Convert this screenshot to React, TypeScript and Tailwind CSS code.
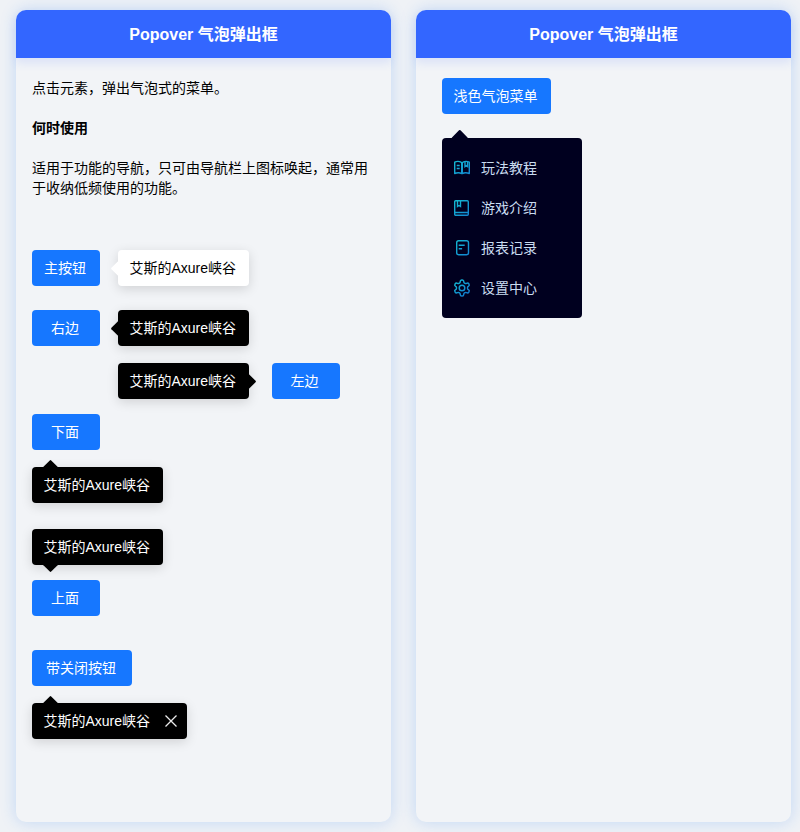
import React from "react";

function Btn({ children, className = "" }: { children: React.ReactNode; className?: string }) {
  return (
    <div className={"h-9 shrink-0 rounded-[4px] bg-[#1677ff] pr-[2px] flex items-center justify-center text-white text-[14px] " + className}>
      {children}
    </div>
  );
}

function Pop({ children, className = "", arrow }: { children?: React.ReactNode; className?: string; arrow: string }) {
  return (
    <div className={"relative h-9 shrink-0 rounded-[4px] pl-[11.5px] flex items-center text-[14px] shadow-[0_3px_12px_rgba(0,0,0,0.14)] " + className}>
      <span className={"absolute w-[11px] h-[11px] rotate-45 rounded-[1px] " + arrow} />
      <span className="relative whitespace-nowrap pr-[12.5px]">艾斯的Axure峡谷</span>
      {children}
    </div>
  );
}

function Header() {
  return (
    <div className="relative h-12 shrink-0 rounded-t-[10px] bg-[#3366ff] pt-[2px] flex items-center justify-center text-white text-[16px] font-bold shadow-[0_5px_10px_rgba(51,102,255,0.12)]">
      Popover 气泡弹出框
    </div>
  );
}

const dark = "bg-black text-white";
const card = "w-[375px] h-[812px] rounded-[10px] bg-[#f2f4f7] shadow-[0_0_16px_rgba(30,120,240,0.22)] flex flex-col";

const items: [string, React.ReactNode][] = [
  [
    "玩法教程",
    <>
      <path d="M2.700 4.200c2-1 4.500-1 6.300 0 .4.200.7.600.7 1.100v10.200c-2-1-4.700-1-7 0z" strokeLinejoin="round" />
      <path d="M17.300 4.200c-2-1-4.500-1-6.300 0-.4.200-.7.600-.7 1.100v10.200c2-1 4.700-1 7 0z" strokeLinejoin="round" />
      <path d="M4.700 7.500h3M4.700 10.500h3M13 3.600v5l1.300-1 1.300 1V3.600" />
    </>,
  ],
  [
    "游戏介绍",
    <>
      <rect x="2.700" y="2.700" width="13.600" height="14.600" rx="1" />
      <path d="M2.700 14.500h13.600M5.500 2.700v5.800l1.500-1 1.500 1V2.700" />
    </>,
  ],
  [
    "报表记录",
    <>
      <rect x="4.700" y="2.700" width="11.800" height="14" rx="2" />
      <path d="M6.700 7.300h6M6.700 10.700h3.400" strokeWidth="1.600" />
    </>,
  ],
  [
    "设置中心",
    <g transform="translate(0.400 0.400) scale(0.8)" strokeWidth="1.800">
      <path d="M12.220 2h-.44a2 2 0 0 0-2 2v.18a2 2 0 0 1-1 1.730l-.43.250a2 2 0 0 1-2 0l-.15-.08a2 2 0 0 0-2.730.730l-.22.380a2 2 0 0 0 .730 2.730l.15.100a2 2 0 0 1 1 1.720v.510a2 2 0 0 1-1 1.740l-.15.090a2 2 0 0 0-.730 2.730l.22.380a2 2 0 0 0 2.730.730l.15-.08a2 2 0 0 1 2 0l.43.250a2 2 0 0 1 1 1.730V20a2 2 0 0 0 2 2h.44a2 2 0 0 0 2-2v-.18a2 2 0 0 1 1-1.730l.43-.25a2 2 0 0 1 2 0l.15.08a2 2 0 0 0 2.730-.73l.22-.39a2 2 0 0 0-.73-2.730l-.15-.08a2 2 0 0 1-1-1.740v-.5a2 2 0 0 1 1-1.740l.15-.09a2 2 0 0 0 .73-2.730l-.22-.38a2 2 0 0 0-2.730-.73l-.15.08a2 2 0 0 1-2 0l-.43-.25a2 2 0 0 1-1-1.730V4a2 2 0 0 0-2-2z" />
      <circle cx="12" cy="12" r="3.500" />
    </g>,
  ],
];

export default function App() {
  return (
    <div className="w-[800px] h-[832px] overflow-hidden bg-[#eff2f6] pt-[10px] pl-4 flex gap-[25px] font-['Liberation_Sans','Noto_Sans_CJK_SC',sans-serif] text-black">
      <div className={card}>
        <Header />
        <div className="flex-1 px-4 pt-5 text-[14px] leading-5">
          <p>点击元素，弹出气泡式的菜单。</p>
          <p className="mt-5 font-bold">何时使用</p>
          <p className="mt-5">适用于功能的导航，只可由导航栏上图标唤起，通常用于收纳低频使用的功能。</p>

          <div className="mt-[52px] flex gap-[18px]">
            <Btn className="w-[68px]">主按钮</Btn>
            <Pop className="bg-white" arrow="bg-white -left-[5.5px] top-[12.5px]" />
          </div>
          <div className="mt-6 flex gap-[18px]">
            <Btn className="w-[68px]">右边</Btn>
            <Pop className={dark} arrow="bg-black -left-[5.5px] top-[12.5px]" />
          </div>
          <div className="mt-[17px] flex gap-[23px] pl-[86px]">
            <Pop className={dark} arrow="bg-black -right-[5.5px] top-[12.5px]" />
            <Btn className="w-[68px]">左边</Btn>
          </div>
          <Btn className="mt-[15px] w-[68px]">下面</Btn>
          <div className="mt-[17px] flex">
            <Pop className={dark} arrow="bg-black left-[12.5px] -top-[5px]" />
          </div>
          <div className="mt-[26px] flex">
            <Pop className={dark} arrow="bg-black left-[12.5px] -bottom-[5px]" />
          </div>
          <Btn className="mt-[15px] w-[68px]">上面</Btn>
          <div className="mt-[34px] flex">
            <Btn className="w-[100px]">带关闭按钮</Btn>
          </div>
          <div className="mt-[17px] flex">
            <Pop className={dark} arrow="bg-black left-[12.5px] -top-[5px]">
              <svg width="12" height="12" viewBox="0 0 12 12" className="mr-[10px] ml-[2px]" stroke="#ececec" strokeWidth="1.300" fill="none">
                <path d="M.5.5l11 11M11.500.5l-11 11" />
              </svg>
            </Pop>
          </div>
        </div>
      </div>

      <div className={card}>
        <Header />
        <div className="flex-1 pl-[26px] pt-5 text-[14px] leading-5">
          <Btn className="w-[109px]">浅色气泡菜单</Btn>
          <div className="relative mt-6 w-[140px] h-[180px] rounded-[4px] bg-[#00001f] py-[10px]">
            <span className="absolute w-[11.5px] h-[11.5px] rotate-45 rounded-[1px] bg-[#00001f] left-[12.25px] -top-[5.75px]" />
            {items.map(([label, icon], i) => (
              <div key={label} className="relative h-10 flex items-center pl-[10px] gap-[9px] text-[#c9dcf0]">
                <svg width="20" height="20" viewBox="0 0 20 20" fill="none" stroke={`url(#icon-grad-${i})`} strokeWidth="1.400">
                  <defs>
                    <linearGradient id={`icon-grad-${i}`} gradientUnits="userSpaceOnUse" x1="2" y1="2" x2="18" y2="18">
                      <stop offset="0" stopColor="#14bfd2" />
                      <stop offset="1" stopColor="#1280d0" />
                    </linearGradient>
                  </defs>
                  {icon}
                </svg>
                <span>{label}</span>
              </div>
            ))}
          </div>
        </div>
      </div>
    </div>
  );
}
